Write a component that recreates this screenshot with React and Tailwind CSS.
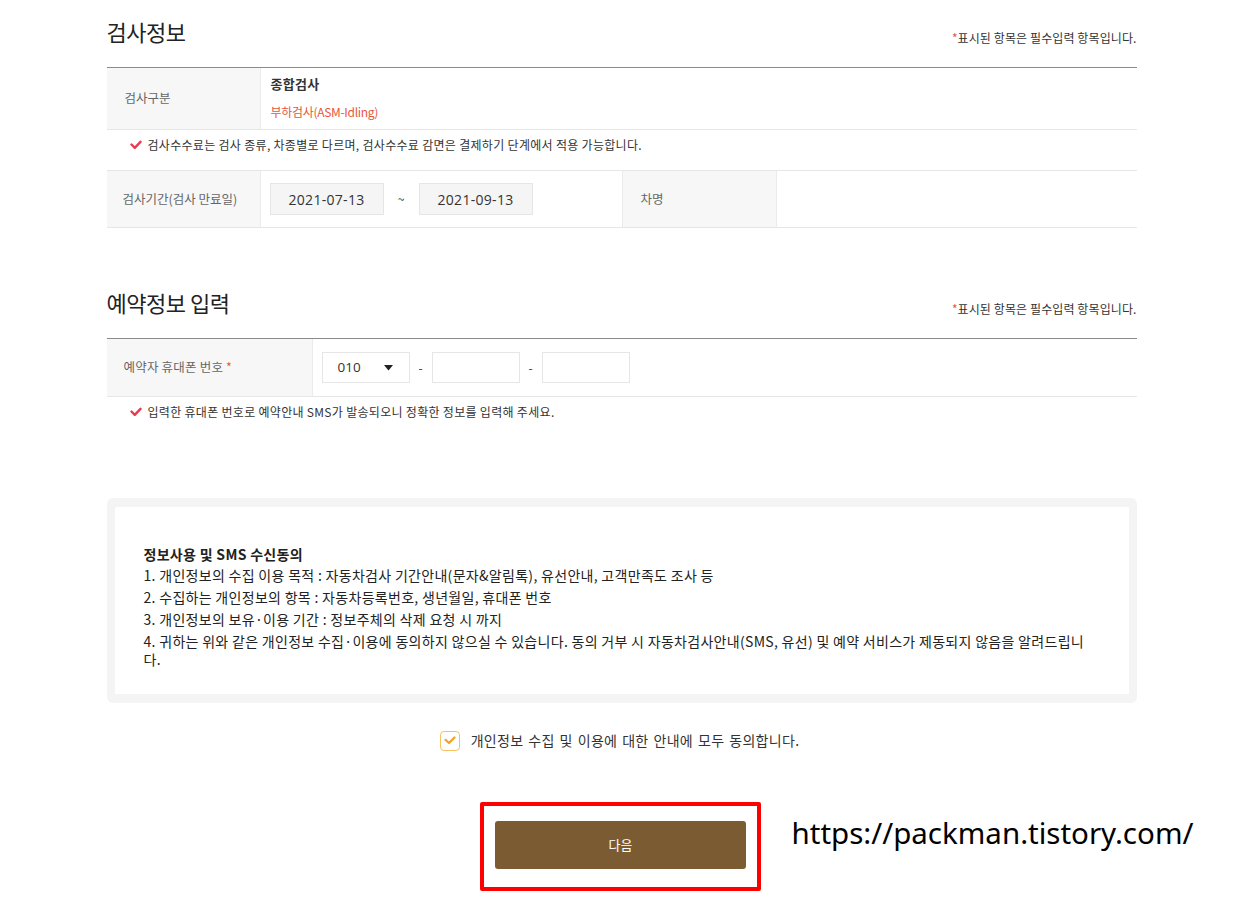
import React from "react";

const KR = { fontFamily: '"Noto Sans CJK KR", "Noto Sans", sans-serif' };
const NUM = { fontFamily: '"Open Sans", "Noto Sans CJK KR", sans-serif' };

function Check() {
  return (
    <svg viewBox="0 0 12 10" width="12" height="10">
      <path d="M1.5 4.5 L4.8 7.8 L10.5 1.8" fill="none" stroke="#e83a50" strokeWidth="2.4" strokeLinecap="round" strokeLinejoin="round" />
    </svg>
  );
}

function Notice({ children }) {
  return (
    <div className="flex items-center gap-[6px] pl-[23px] pt-[7px] text-[12px] leading-[16px] text-[#333] tracking-[0.3px]">
      <Check />
      <span>{children}</span>
    </div>
  );
}

function SectionHeader({ title }) {
  return (
    <div className="flex h-[30px] items-end justify-between">
      <h2 className="text-[22px] leading-[30px] text-[#222] tracking-[-0.5px]">{title}</h2>
      <p className="text-[12px] leading-[16px] text-[#333] tracking-[0.1px]">
        <span className="text-[#e8553d]">*</span>표시된 항목은 필수입력 항목입니다.
      </p>
    </div>
  );
}

export default function App() {
  return (
    <div className="min-h-[905px] bg-white" style={KR}>
      <div className="mx-auto w-[1030px] pt-[16px]">
        <SectionHeader title="검사정보" />

        <div className="mt-[21px] border-t border-[#8a8a8a]">
          <div className="flex h-[62px] border-b border-[#e6e6e6]">
            <div className="flex w-[154px] items-center bg-[#f7f7f7] pl-[18px] text-[12.5px] text-[#666] border-r border-[#ebebeb]">
              검사구분
            </div>
            <div className="flex flex-col gap-[12px] pl-[10px] pt-[7px]">
              <div className="text-[13px] font-bold leading-[17px] text-[#333] tracking-[0.3px]">종합검사</div>
              <div className="text-[12px] leading-[16px] text-[#e8553d] tracking-[-0.3px]">부하검사(ASM-Idling)</div>
            </div>
          </div>
        </div>

        <div className="h-[40px]">
          <Notice>검사수수료는 검사 종류, 차종별로 다르며, 검사수수료 감면은 결제하기 단계에서 적용 가능합니다.</Notice>
        </div>

        <div className="flex h-[58px] border-y border-[#e6e6e6]">
          <div className="flex w-[154px] items-center bg-[#f7f7f7] pl-[16px] text-[12.5px] text-[#666] border-r border-[#ebebeb]">
            검사기간(검사 만료일)
          </div>
          <div className="flex w-[361px] items-center pl-[9px]">
            <div className="flex h-[32px] w-[114px] items-center justify-center border border-[#e6e6e6] bg-[#f5f5f5] text-[14px] text-[#333] tracking-[0.3px]" style={NUM}>
              2021-07-13
            </div>
            <div className="w-[35px] text-center text-[12px] text-[#333]">~</div>
            <div className="flex h-[32px] w-[114px] items-center justify-center border border-[#e6e6e6] bg-[#f5f5f5] text-[14px] text-[#333] tracking-[0.3px]" style={NUM}>
              2021-09-13
            </div>
          </div>
          <div className="flex w-[155px] items-center bg-[#f7f7f7] pl-[18px] text-[12.5px] text-[#666] border-x border-[#ebebeb]">
            차명
          </div>
          <div className="flex-1" />
        </div>

        <div className="mt-[59px]">
          <SectionHeader title="예약정보 입력" />
        </div>

        <div className="mt-[21px] border-t border-[#8a8a8a]">
          <div className="flex h-[58px] border-b border-[#e6e6e6]">
            <div className="flex w-[206px] items-center bg-[#f7f7f7] pl-[17px] text-[12.5px] text-[#666] border-r border-[#ebebeb] tracking-[0.2px]">
              예약자 휴대폰 번호&nbsp;<span className="text-[#e8553d]">*</span>
            </div>
            <div className="flex items-center pl-[9px]">
              <div className="flex h-[31px] w-[88px] items-center justify-between border border-[#e6e6e6] bg-white pl-[15px] pr-[16px] text-[13.5px] text-[#333]" style={NUM}>
                <span>010</span>
                <svg width="9" height="6" viewBox="0 0 9 6"><path d="M0 0 H9 L4.5 5.5 Z" fill="#222" /></svg>
              </div>
              <div className="w-[22px] text-center text-[12px] text-[#333]">-</div>
              <div className="h-[31px] w-[88px] border border-[#e6e6e6] bg-white" />
              <div className="w-[22px] text-center text-[12px] text-[#333]">-</div>
              <div className="h-[31px] w-[88px] border border-[#e6e6e6] bg-white" />
            </div>
          </div>
        </div>

        <Notice>입력한 휴대폰 번호로 예약안내 SMS가 발송되오니 정확한 정보를 입력해 주세요.</Notice>

        <div className="mt-[78px] rounded-[6px] bg-[#f4f4f4] px-[8px] py-[9px]">
          <div className="bg-white pl-[29px] pr-[20px] pt-[36px] pb-[26px] text-[14px] text-[#222] tracking-[0.3px]">
            <div className="font-bold leading-[22px]">정보사용 및 SMS 수신동의</div>
            <div className="mt-[1px] flex flex-col gap-[4px] leading-[18px]">
              <p>1. 개인정보의 수집 이용 목적 : 자동차검사 기간안내(문자&amp;알림톡), 유선안내, 고객만족도 조사 등</p>
              <p>2. 수집하는 개인정보의 항목 : 자동차등록번호, 생년월일, 휴대폰 번호</p>
              <p>3. 개인정보의 보유·이용 기간 : 정보주체의 삭제 요청 시 까지</p>
              <p>
                <span className="whitespace-nowrap">4. 귀하는 위와 같은 개인정보 수집·이용에 동의하지 않으실 수 있습니다. 동의 거부 시 자동차검사안내(SMS, 유선) 및 예약 서비스가 제동되지 않음을 알려드립니</span>
                <br />다.
              </p>
            </div>
          </div>
        </div>

        <div className="mt-[27px] flex items-center justify-center gap-[11px] pr-[4px]">
          <div className="flex h-[20px] w-[20px] items-center justify-center rounded-[4px] border border-[#f6c063] bg-white">
            <svg width="12" height="9" viewBox="0 0 12 9">
              <path d="M1.5 3.8 L5 7 L10.5 1.5" fill="none" stroke="#f5a020" strokeWidth="2.2" strokeLinecap="round" strokeLinejoin="round" />
            </svg>
          </div>
          <span className="text-[14px] text-[#333] tracking-[0.3px] [word-spacing:1.5px]">개인정보 수집 및 이용에 대한 안내에 모두 동의합니다.</span>
        </div>

        <div className="relative mt-[51px] flex justify-center">
          <div className="-translate-x-[1px] rounded-[2px] border-[4px] border-[#ff0000] px-[11px] pt-[15px] pb-[18px]">
            <button className="flex h-[48px] w-[251px] items-center justify-center rounded-[3px] bg-[#7b5c32] text-[13px] text-white">
              다음
            </button>
          </div>
          <div
            className="absolute left-[685px] top-[9px] text-[29.5px] leading-[44px] text-black"
            style={{ fontFamily: '"Noto Sans", "Open Sans", sans-serif' }}
          >
            https://packman.tistory.com/
          </div>
        </div>
      </div>
    </div>
  );
}
